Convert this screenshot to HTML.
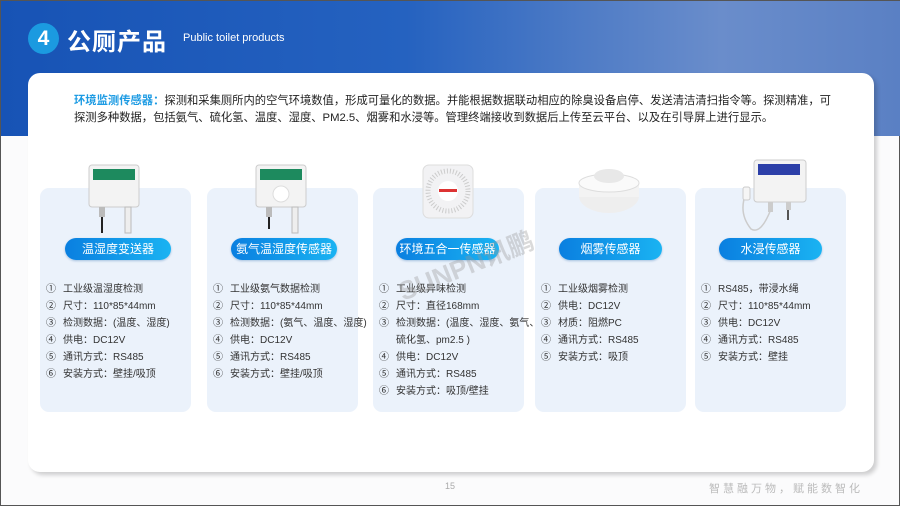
<!DOCTYPE html>
<html><head><meta charset="utf-8"><style>
*{margin:0;padding:0;box-sizing:border-box}
body{width:900px;height:506px;overflow:hidden;background:#fbfbfc;font-family:"Liberation Sans","Noto Sans CJK SC",sans-serif;position:relative;border:1px solid #555}
.hdr{position:absolute;left:0;top:0;width:900px;height:135px;background:linear-gradient(90deg,#1753b5 0%,#2562c0 45%,#4f7cc6 65%,#6a8dcb 80%,#5a80c4 100%)}
.num{position:absolute;left:27px;top:22px;width:31px;height:31px;border-radius:50%;background:#1b9ae0;color:#fff;font-weight:bold;font-size:21px;text-align:center;line-height:31px}
.t1{position:absolute;left:66px;top:21px;color:#fff;font-size:24px;font-weight:bold;letter-spacing:1px}
.t2{position:absolute;left:182px;top:31px;color:#fff;font-size:11px}
.card{position:absolute;left:27px;top:72px;width:846px;height:399px;background:#fff;border-radius:12px;box-shadow:3px 3px 4px rgba(0,0,0,.18)}
.intro{position:absolute;left:73px;top:92px;font-size:11.3px;line-height:17px;color:#222;white-space:nowrap}
.intro b{color:#1d9be3;font-weight:bold}
.pc{position:absolute;top:187px;width:151px;height:224px;background:#ebf2fb;border-radius:9px}
.pill{position:absolute;top:237px;height:22px;border-radius:11px;background:linear-gradient(90deg,#0a7fe0,#1ab3f2);color:#fff;font-size:12px;text-align:center;line-height:22px;box-shadow:0 1px 2px rgba(0,80,160,.3)}
.ls{position:absolute;top:280px;font-size:10px;line-height:17px;color:#333}
.ls div{white-space:nowrap}
.ls span{display:inline-block;width:17px}
.pn{position:absolute;left:444px;top:480px;font-size:9px;color:#aaa}
.sl{position:absolute;left:708px;top:479px;font-size:11px;color:#bbb;letter-spacing:3px}
.wm{position:absolute;left:393px;top:245px;font-size:26px;color:rgba(150,150,150,.35);transform:rotate(-22deg);font-weight:bold}
</style></head><body>
<div class="hdr"></div>
<div class="num">4</div>
<div class="t1">公厕产品</div>
<div class="t2">Public toilet products</div>
<div class="card"></div>
<div class="intro"><b>环境监测传感器：</b>探测和采集厕所内的空气环境数值，形成可量化的数据。并能根据数据联动相应的除臭设备启停、发送清洁清扫指令等。探测精准，可<br>探测多种数据，包括氨气、硫化氢、温度、湿度、PM2.5、烟雾和水浸等。管理终端接收到数据后上传至云平台、以及在引导屏上进行显示。</div>

<div class="pc" style="left:39px"></div>
<div class="pc" style="left:206px"></div>
<div class="pc" style="left:372px"></div>
<div class="pc" style="left:534px"></div>
<div class="pc" style="left:694px"></div>

<svg style="position:absolute;left:0;top:150px" width="900" height="90">
<rect x="88" y="14" width="50" height="42" rx="3" fill="#f3f3f3" stroke="#ccc"/>
<rect x="92" y="18" width="42" height="11" fill="#1d8a5e"/>
<rect x="98" y="56" width="6" height="10" fill="#bbb"/><rect x="100" y="66" width="2" height="16" fill="#222"/>
<rect x="124" y="56" width="6" height="26" fill="#eee" stroke="#bbb"/>
<rect x="255" y="14" width="50" height="42" rx="3" fill="#f3f3f3" stroke="#ccc"/>
<rect x="259" y="18" width="42" height="11" fill="#1d8a5e"/>
<circle cx="280" cy="43" r="8" fill="#fff" stroke="#ddd"/>
<rect x="265" y="56" width="6" height="10" fill="#bbb"/><rect x="267" y="66" width="2" height="12" fill="#222"/>
<rect x="291" y="56" width="6" height="26" fill="#eee" stroke="#bbb"/>
<rect x="422" y="14" width="50" height="53" rx="6" fill="#f2f2f4" stroke="#ddd"/>
<circle cx="447" cy="40" r="20" fill="none" stroke="#ccc" stroke-dasharray="1 2" stroke-width="5"/>
<circle cx="447" cy="40" r="10" fill="#fff"/>
<rect x="438" y="38" width="18" height="3" fill="#d33"/>
<ellipse cx="608" cy="45" rx="30" ry="17" fill="#eeeeee"/>
<rect x="578" y="32" width="60" height="14" fill="#f3f3f3"/>
<ellipse cx="608" cy="32" rx="30" ry="9" fill="#fafafa" stroke="#ddd"/>
<ellipse cx="608" cy="25" rx="15" ry="7" fill="#e8e8e8"/>
<rect x="753" y="9" width="52" height="42" rx="3" fill="#f3f3f3" stroke="#ccc"/>
<rect x="757" y="13" width="42" height="11" fill="#2c3fa8"/>
<path d="M745 42 q-8 20 5 36 q10 6 20 -20" fill="none" stroke="#ccc" stroke-width="1.5"/>
<rect x="742" y="36" width="7" height="13" rx="2" fill="#f5f5f5" stroke="#ccc"/>
<rect x="767" y="51" width="5" height="10" fill="#ccc"/><rect x="785" y="51" width="5" height="8" fill="#ccc"/><rect x="786" y="59" width="2" height="10" fill="#555"/>
</svg>

<div class="pill" style="left:64px;width:106px">温湿度变送器</div>
<div class="pill" style="left:230px;width:106px">氨气温湿度传感器</div>
<div class="pill" style="left:395px;width:103px">环境五合一传感器</div>
<div class="pill" style="left:558px;width:103px">烟雾传感器</div>
<div class="pill" style="left:718px;width:103px">水浸传感器</div>

<div class="ls" style="left:45px"><div><span>①</span>工业级温湿度检测</div><div><span>②</span>尺寸：110*85*44mm</div><div><span>③</span>检测数据：(温度、湿度)</div><div><span>④</span>供电：DC12V</div><div><span>⑤</span>通讯方式：RS485</div><div><span>⑥</span>安装方式：壁挂/吸顶</div></div>
<div class="ls" style="left:212px"><div><span>①</span>工业级氨气数据检测</div><div><span>②</span>尺寸：110*85*44mm</div><div><span>③</span>检测数据：(氨气、温度、湿度)</div><div><span>④</span>供电：DC12V</div><div><span>⑤</span>通讯方式：RS485</div><div><span>⑥</span>安装方式：壁挂/吸顶</div></div>
<div class="ls" style="left:378px"><div><span>①</span>工业级异味检测</div><div><span>②</span>尺寸：直径168mm</div><div><span>③</span>检测数据：(温度、湿度、氨气、</div><div><span></span>硫化氢、pm2.5 )</div><div><span>④</span>供电：DC12V</div><div><span>⑤</span>通讯方式：RS485</div><div><span>⑥</span>安装方式：吸顶/壁挂</div></div>
<div class="ls" style="left:540px"><div><span>①</span>工业级烟雾检测</div><div><span>②</span>供电：DC12V</div><div><span>③</span>材质：阻燃PC</div><div><span>④</span>通讯方式：RS485</div><div><span>⑤</span>安装方式：吸顶</div></div>
<div class="ls" style="left:700px"><div><span>①</span>RS485，带浸水绳</div><div><span>②</span>尺寸：110*85*44mm</div><div><span>③</span>供电：DC12V</div><div><span>④</span>通讯方式：RS485</div><div><span>⑤</span>安装方式：壁挂</div></div>

<div class="wm">SUNPN讯鹏</div>
<div class="pn">15</div>
<div class="sl">智慧融万物，赋能数智化</div>
</body></html>
